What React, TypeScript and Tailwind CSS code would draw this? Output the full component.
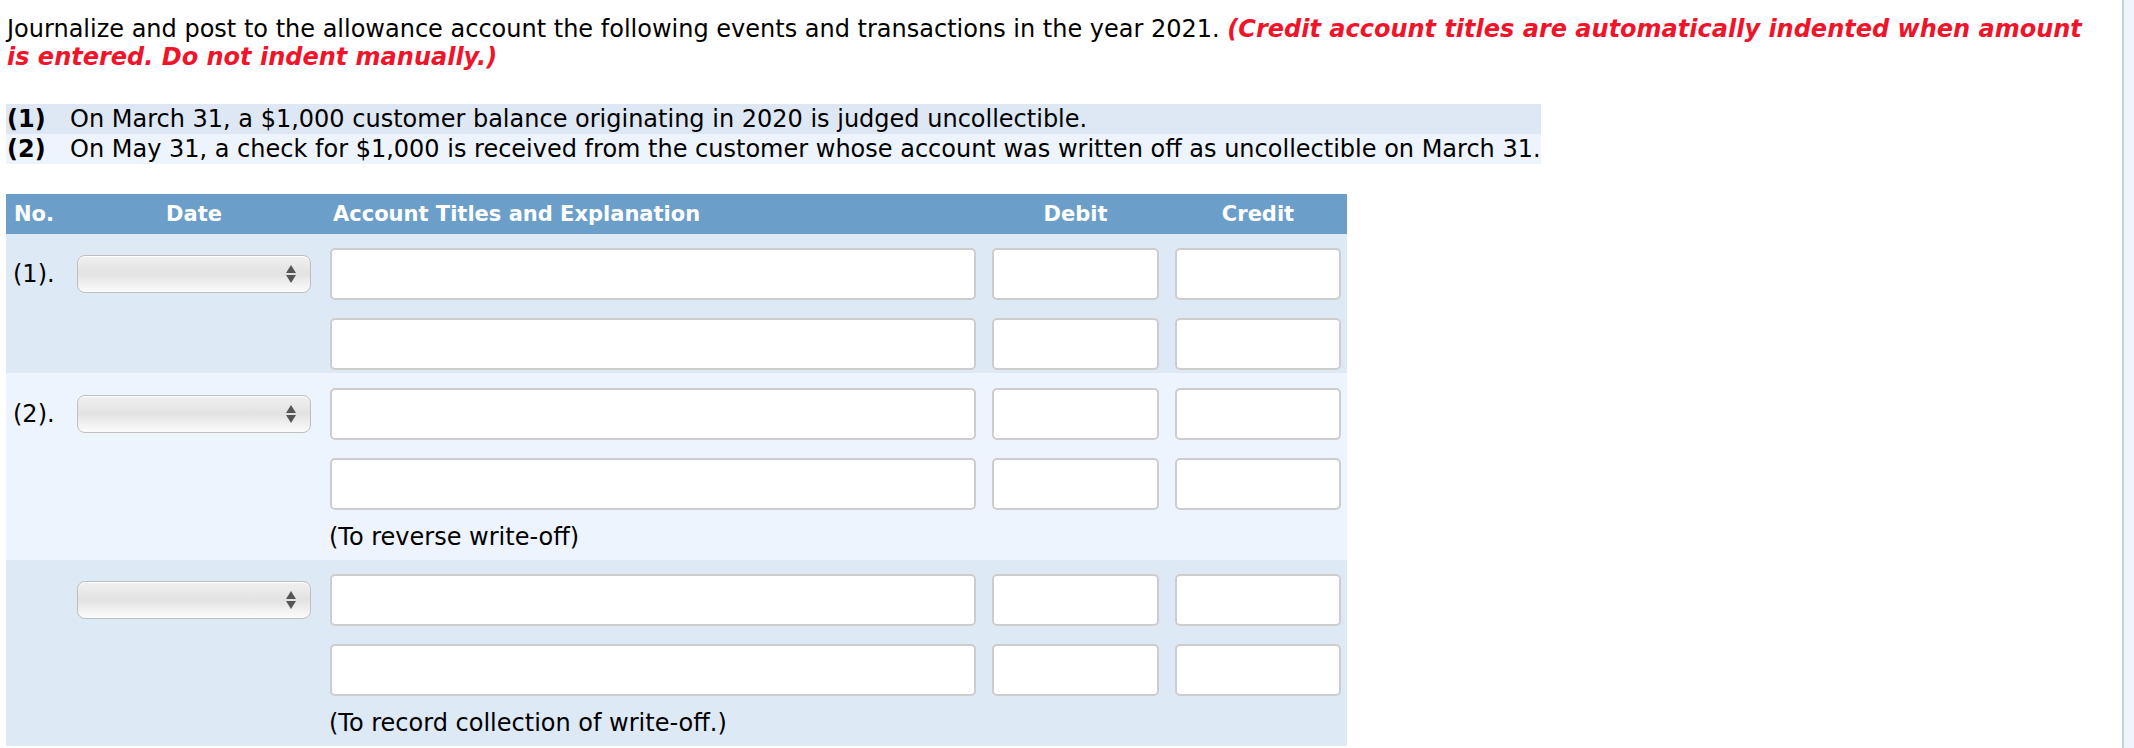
import React from 'react';

const font = { fontFamily: '"DejaVu Sans", Verdana, sans-serif' };

const SelectBox: React.FC = () => (
  <div className="relative w-[234px] h-[38px] rounded-[8px] border border-[#bfbfbf] bg-gradient-to-b from-[#f0f0f0] via-[#e2e2e2] to-[#fcfcfc] shadow-[inset_0_1px_0_#ffffff]">
    <div className="absolute right-[14px] top-1/2 -translate-y-1/2 flex flex-col items-center gap-[2px]">
      <svg width="10" height="8" viewBox="0 0 10 8">
        <path d="M5 0 L10 8 L0 8 Z" fill="#555555" />
      </svg>
      <svg width="10" height="8" viewBox="0 0 10 8">
        <path d="M0 0 L10 0 L5 8 Z" fill="#555555" />
      </svg>
    </div>
  </div>
);

const Field: React.FC<{ w: string }> = ({ w }) => (
  <div className={`${w} h-[52px] rounded-[5px] border-2 border-[#cdcdcd] bg-white`} />
);

const LineRow: React.FC<{ label?: string; first?: boolean }> = ({ label, first }) => (
  <div className="grid grid-cols-[71px_253px_662px_183px_172px] items-center">
    <div className="pl-[7px]">{first ? label : ''}</div>
    <div className="flex items-center">{first ? <SelectBox /> : null}</div>
    <div><Field w="w-[646px]" /></div>
    <div><Field w="w-[167px]" /></div>
    <div><Field w="w-[166px]" /></div>
  </div>
);

interface EntryProps {
  label?: string;
  note?: string;
  bg: string;
  top: string;
}

const Entry: React.FC<EntryProps> = ({ label, note, bg, top }) => (
  <div className={`${bg} ${top} ${note ? 'pb-[9px]' : 'pb-[3px]'}`}>
    <div className="flex flex-col gap-[18px]">
      <LineRow label={label} first />
      <LineRow />
    </div>
    {note && <div className="mt-[13px] pl-[323px] leading-[28px]">{note}</div>}
  </div>
);

export default function App() {
  return (
    <div className="flex min-h-screen bg-white text-[24px] text-black" style={font}>
      <main className="flex-1 pl-[6px]">
        <p className="pt-[15px] pb-[3px] pl-[1px] leading-[28px]">
          Journalize and post to the allowance account the following events and transactions in the year 2021.{' '}
          <span className="font-bold italic text-[#f0142a]">
            (Credit account titles are automatically indented when amount
            <br />
            is entered. Do not indent manually.)
          </span>
        </p>

        <div className="mt-[30px] w-fit pr-[2px]">
          <div className="flex h-[30px] items-center bg-[#dee8f5]">
            <span className="w-[64px] pl-[1px] font-bold">(1)</span>
            <span>On March 31, a $1,000 customer balance originating in 2020 is judged uncollectible.</span>
          </div>
          <div className="flex h-[30px] items-center bg-[#edf4fd]">
            <span className="w-[64px] pl-[1px] font-bold">(2)</span>
            <span>On May 31, a check for $1,000 is received from the customer whose account was written off as uncollectible on March 31.</span>
          </div>
        </div>

        <div className="mt-[30px] w-[1341px]">
          <div className="grid h-[40px] grid-cols-[71px_253px_662px_183px_172px] items-center bg-[#6b9fca] pt-[2px] text-[21px] font-bold text-white">
            <div className="pl-[8px]">No.</div>
            <div className="w-[234px] text-center">Date</div>
            <div className="pl-[3px]">Account Titles and Explanation</div>
            <div className="w-[167px] text-center">Debit</div>
            <div className="w-[166px] text-center">Credit</div>
          </div>
          <Entry label="(1)." bg="bg-[#dee9f6]" top="pt-[14px]" />
          <Entry label="(2)." bg="bg-[#edf4fd]" top="pt-[15px]" note="(To reverse write-off)" />
          <Entry bg="bg-[#dee9f6]" top="pt-[14px]" note="(To record collection of write-off.)" />
        </div>
      </main>
      <aside className="w-[12px] border-l-2 border-[#c6d1de] bg-[#f0f5fb]" />
    </div>
  );
}
